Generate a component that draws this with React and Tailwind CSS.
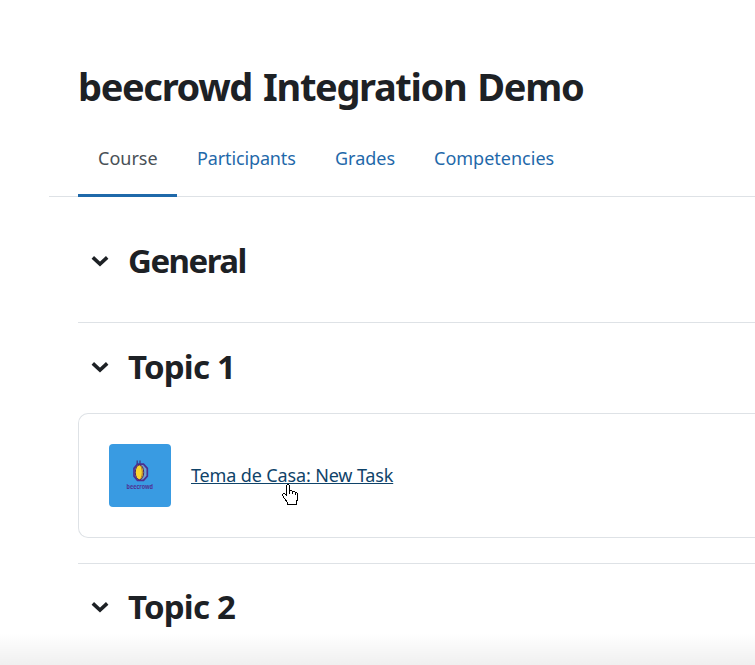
const chevron = (
  <svg width="18" height="12" viewBox="0 0 18 12" fill="none">
    <path d="M1.8 2.4 9 9 16.2 2.4" stroke="#1d2125" strokeWidth="3.6" />
  </svg>
);

function SectionTitle({ children, className, spacing }) {
  return (
    <div className={"flex items-center pl-[13px] text-[#1d2125] " + className}>
      {chevron}
      <h3 className={"ml-[19px] text-[33px] leading-[40px] font-bold whitespace-nowrap " + spacing}>{children}</h3>
    </div>
  );
}

function BeecrowdLogo() {
  return (
    <svg width="62" height="63" viewBox="0 0 62 63">
      <path d="M28.2 20v-3.6M31 20v-3.6" stroke="#3f3a86" strokeWidth="1.3" />
      <path d="M28.500 20.200h6l3.800 4.200v7.700l-3.800 4.300h-6l-3.500-4.300v-7.700z" fill="#6e9fd0" stroke="#4b2f8f" strokeWidth="1.700" />
      <ellipse cx="30.500" cy="28.300" rx="4.200" ry="7.400" fill="#fad52f" stroke="#4a2a5e" strokeWidth="1" />
      <path d="M31.800 21.800c2 4 2 9 0 13" stroke="#8a5a35" strokeWidth="0.800" fill="none" />
      <text x="30.800" y="45.300" fontSize="7.200" fontWeight="700" textAnchor="middle" textLength="26.500" lengthAdjust="spacingAndGlyphs" fill="#4d3597">
        beecrowd
      </text>
    </svg>
  );
}

function HandCursor() {
  return (
    <svg className="absolute top-[484px] left-[281px]" width="17" height="22" viewBox="0 0 17 22" shapeRendering="crispEdges">
      <path
        d="M5.500 1.500 6.500.5h1l1 1v5h2l1 1h2l1 1h1l1 1v6l-1 2v3h-9v-2l-3-4-2-3v-1l1-1h1l2 2z"
        fill="#fff"
        stroke="#000"
        strokeWidth="1"
      />
      <path d="M8.500 6v4M11.500 7v3M14.500 8v3" stroke="#000" fill="none" />
    </svg>
  );
}

export default function App() {
  return (
    <div className="relative h-[665px] w-[755px] overflow-hidden bg-white font-['Noto_Sans',sans-serif]">
      <h1 className="ml-[78px] pt-[61px] text-[38px] leading-[50px] font-bold tracking-[-1.34px] whitespace-nowrap text-[#1d2125] [word-spacing:2.5px]">
        beecrowd Integration Demo
      </h1>
      <nav className="mt-[9px] ml-[49px] flex h-[77px] border-b border-[#dee2e6] pl-[29px] text-[18px] leading-[77px] whitespace-nowrap text-[#1f69aa]">
        <a className="h-[77px] w-[99px] border-b-3 border-[#1f69aa] pl-[20px]">
          <span className="text-[#495057]">Course</span>
        </a>
        <a className="w-[138px] pl-[20px] tracking-[-0.13px]">Participants</a>
        <a className="w-[99px] pl-[20px]">Grades</a>
        <a className="pl-[20px]">Competencies</a>
      </nav>
      <main className="ml-[78px]">
        <SectionTitle className="h-[126px] border-b border-[#dee2e6] pt-[3px]" spacing="tracking-[-1.5px]">General</SectionTitle>
        <SectionTitle className="h-[90px] pb-[2px]" spacing="tracking-[-0.8px]">Topic 1</SectionTitle>
        <div className="flex h-[125px] items-center rounded-l-[10px] border border-r-0 border-[#dee2e6] pl-[30px]">
          <div className="h-[63px] w-[62px] rounded-[4px] bg-[#399be2]">
            <BeecrowdLogo />
          </div>
          <a className="ml-[20px] text-[18px] tracking-[-0.14px] whitespace-nowrap text-[#0f4369] underline">Tema de Casa: New Task</a>
        </div>
        <SectionTitle className="mt-[25px] h-[88px] border-t border-[#dee2e6] pb-[2px]" spacing="tracking-[-0.8px]">Topic 2</SectionTitle>
      </main>
      <div className="absolute inset-x-0 bottom-0 h-[32px] bg-linear-to-b from-transparent to-black/6" />
      <HandCursor />
    </div>
  );
}
